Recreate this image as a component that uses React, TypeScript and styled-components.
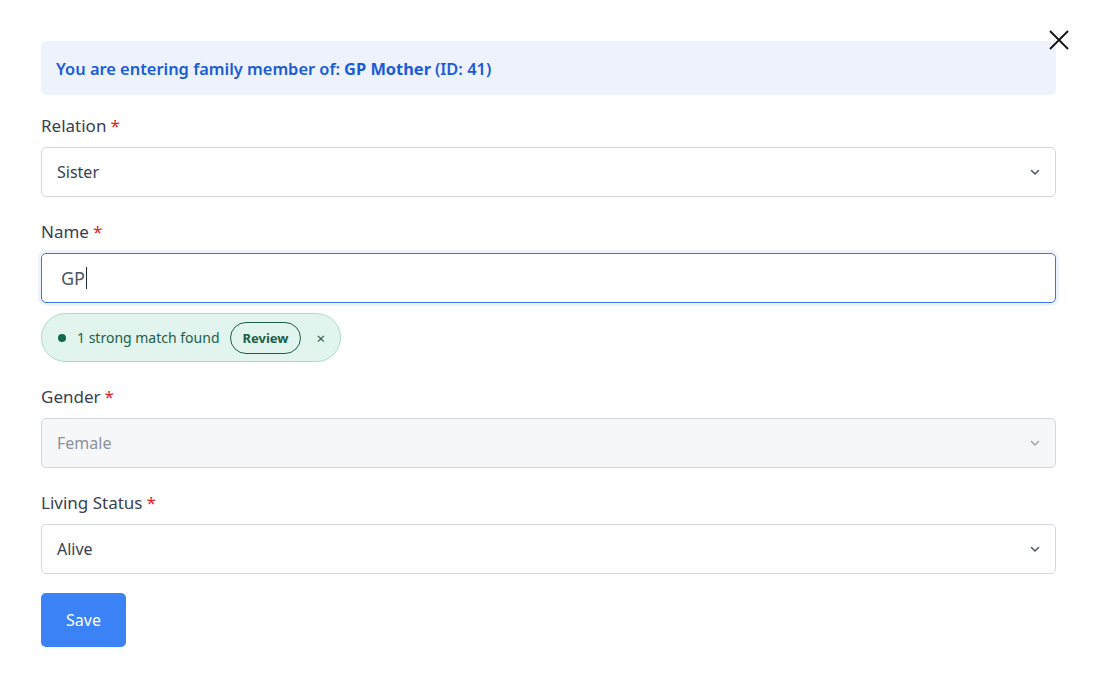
import styled, { createGlobalStyle } from 'styled-components';

const GlobalStyle = createGlobalStyle`
  * { box-sizing: border-box; }
  body {
    margin: 0;
    background: #ffffff;
    font-family: "Noto Sans", "Open Sans", sans-serif;
  }
`;

const Modal = styled.div`
  position: relative;
  width: 1095px;
  height: 685px;
  padding: 41px 39px 0 41px;
  background: #ffffff;
`;

const CloseButton = styled.button`
  position: absolute;
  top: 28px;
  right: 24px;
  width: 24px;
  height: 24px;
  padding: 0;
  border: none;
  background: transparent;
  cursor: pointer;
`;

const Banner = styled.div`
  height: 54px;
  display: flex;
  align-items: center;
  padding: 0 15px;
  border-radius: 6px;
  background: #edf2fd;
  color: #1a5bd6;
  font-size: 16.4px;
  font-weight: 600;
`;

const Strong = styled.strong`
  font-weight: 700;
  margin: 0 4px;
`;

const Form = styled.form`
  display: flex;
  flex-direction: column;
  padding-top: 20px;
  gap: 24px;
`;

const Field = styled.div`
  display: flex;
  flex-direction: column;
  gap: 10px;
`;

const Label = styled.label`
  font-size: 17px;
  line-height: 22px;
  color: #374151;
`;

const Required = styled.span`
  color: #e11d1d;
  margin-left: 4px;
`;

const SelectBox = styled.div<{ $disabled?: boolean }>`
  height: 50px;
  display: flex;
  align-items: center;
  justify-content: space-between;
  padding: 0 14px 0 15px;
  border: 1px solid #d4d6dc;
  border-radius: 5px;
  background: ${(p) => (p.$disabled ? '#f6f7f9' : '#ffffff')};
  color: ${(p) => (p.$disabled ? '#8a919c' : '#374151')};
  font-size: 16px;
`;

const Chevron = styled.svg<{ $disabled?: boolean }>`
  width: 12px;
  height: 12px;
  color: ${(p) => (p.$disabled ? '#9ca3af' : '#4b5563')};
`;

const TextInput = styled.div`
  height: 50px;
  display: flex;
  align-items: center;
  padding: 0 19px;
  border: 1px solid #3b74e8;
  border-radius: 5px;
  box-shadow: 0 0 0 3px #eef3fd;
  color: #4b5563;
  font-size: 18px;
`;

const Caret = styled.span`
  display: inline-block;
  width: 1px;
  height: 22px;
  background: #1f2937;
  margin-left: 1px;
`;

const NameGroup = styled.div`
  display: flex;
  flex-direction: column;
  gap: 10px;
`;

const MatchPill = styled.div`
  align-self: flex-start;
  height: 49px;
  display: flex;
  align-items: center;
  gap: 10px;
  padding: 0 15px 0 16px;
  border: 1px solid #a8dcc7;
  border-radius: 999px;
  background: #e1f4ed;
  color: #1d5e48;
  font-size: 14px;
`;

const Dot = styled.span`
  width: 8px;
  height: 8px;
  border-radius: 50%;
  background: #0f6b4c;
  margin-right: 1px;
`;

const ReviewButton = styled.button`
  height: 32px;
  padding: 0 12px;
  border: 1px solid #1d5e48;
  border-radius: 999px;
  background: transparent;
  color: #1d5e48;
  font-family: inherit;
  font-size: 13px;
  font-weight: 700;
`;

const Dismiss = styled.span`
  margin-left: 5px;
  font-size: 15px;
  color: #1d5e48;
`;

const SaveButton = styled.button`
  align-self: flex-start;
  width: 85px;
  height: 54px;
  margin-top: -5px;
  border: none;
  border-radius: 5px;
  background: #3b82f6;
  color: #ffffff;
  font-family: inherit;
  font-size: 16px;
`;

function ChevronIcon({ disabled }: { disabled?: boolean }) {
  return (
    <Chevron $disabled={disabled} viewBox="0 0 12 12" fill="none">
      <path d="M2.5 4.5 6 8l3.5-3.5" stroke="currentColor" strokeWidth="1.5" strokeLinecap="round" strokeLinejoin="round" />
    </Chevron>
  );
}

function SelectField({ label, value, disabled }: { label: string; value: string; disabled?: boolean }) {
  return (
    <Field>
      <Label>
        {label}
        <Required>*</Required>
      </Label>
      <SelectBox $disabled={disabled}>
        <span>{value}</span>
        <ChevronIcon disabled={disabled} />
      </SelectBox>
    </Field>
  );
}

export default function App() {
  return (
    <>
      <GlobalStyle />
      <Modal>
        <CloseButton aria-label="Close">
          <svg width="24" height="24" viewBox="0 0 24 24">
            <path d="M3 3l18 18M21 3 3 21" stroke="#111" strokeWidth="1.8" />
          </svg>
        </CloseButton>
        <Banner>
          You are entering family member of:<Strong>GP Mother</Strong>(ID: 41)
        </Banner>
        <Form onSubmit={(e) => e.preventDefault()}>
          <SelectField label="Relation" value="Sister" />
          <NameGroup>
            <Field>
              <Label>
                Name<Required>*</Required>
              </Label>
              <TextInput>
                GP<Caret />
              </TextInput>
            </Field>
            <MatchPill>
              <Dot />
              1 strong match found
              <ReviewButton type="button">Review</ReviewButton>
              <Dismiss>×</Dismiss>
            </MatchPill>
          </NameGroup>
          <SelectField label="Gender" value="Female" disabled />
          <SelectField label="Living Status" value="Alive" />
          <SaveButton type="submit">Save</SaveButton>
        </Form>
      </Modal>
    </>
  );
}
